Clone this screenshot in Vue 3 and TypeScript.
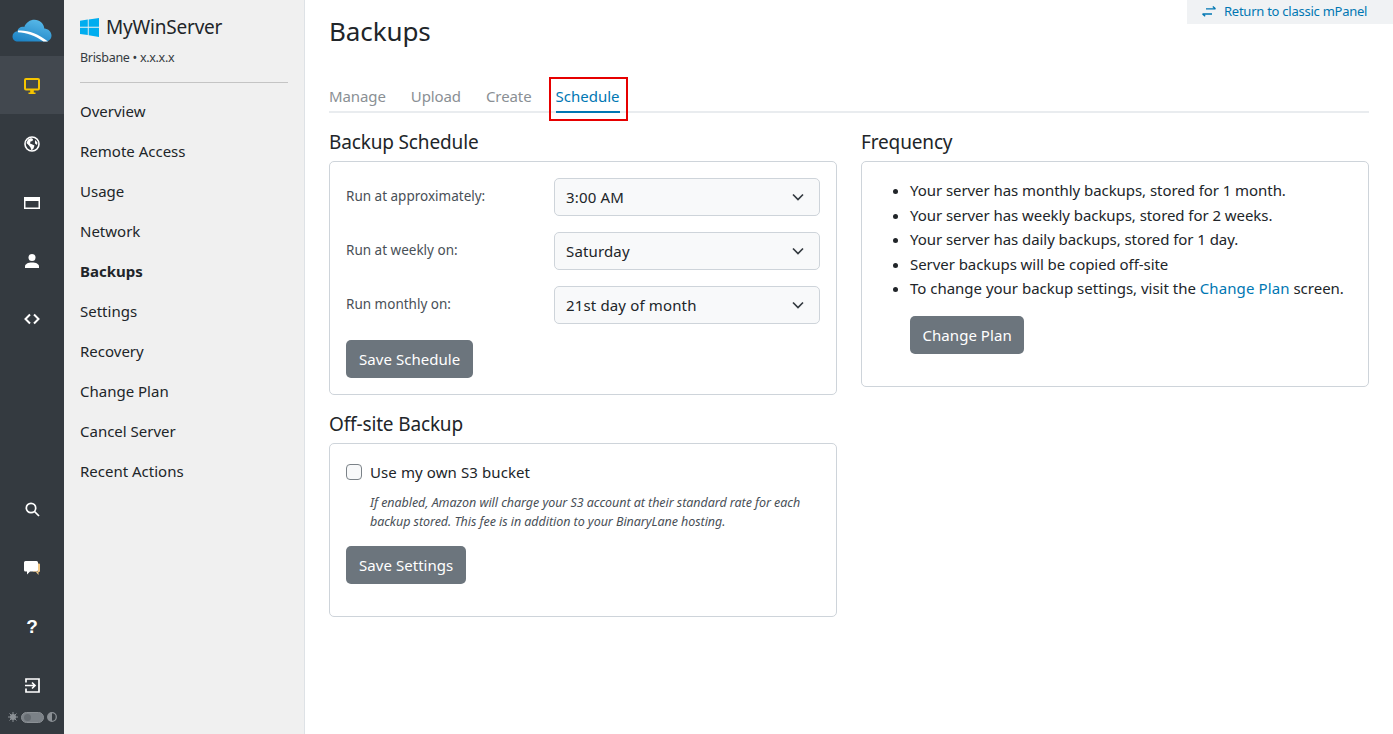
<script setup lang="ts">
const navItems: string[] = ['Overview', 'Remote Access', 'Usage', 'Network', 'Backups', 'Settings', 'Recovery', 'Change Plan', 'Cancel Server', 'Recent Actions']
const tabs: string[] = ['Manage', 'Upload', 'Create', 'Schedule']
const scheduleRows = [
  { label: 'Run at approximately:', value: '3:00 AM' },
  { label: 'Run at weekly on:', value: 'Saturday' },
  { label: 'Run monthly on:', value: '21st day of month' },
]
const plainFacts: string[] = [
  'Your server has monthly backups, stored for 1 month.',
  'Your server has weekly backups, stored for 2 weeks.',
  'Your server has daily backups, stored for 1 day.',
  'Server backups will be copied off-site',
]
</script>

<template>
  <div class="app">
    <aside class="rail">
      <div class="rail-logo">
        <svg width="40" height="23" viewBox="0 0 40 23">
          <defs>
            <linearGradient id="cloudFill" x1="0.65" y1="0" x2="0.2" y2="1">
              <stop offset="0" stop-color="#57b8e8"/>
              <stop offset="1" stop-color="#1c82c4"/>
            </linearGradient>
          </defs>
          <path d="M6 22.500C2.800 22.500 .5 20.300 .5 17.400c0-2.700 2-4.800 4.800-5.100C6 9 9 7.300 12.300 8 14 3.500 18 .8 22.500.8c5.300 0 9.300 3.600 9.800 8.600 4 .3 7.200 3.300 7.200 7 0 3.500-2.700 6.100-6.200 6.100z" fill="url(#cloudFill)"/>
          <path d="M6 11.600C15 10.800 26 14.500 36 22.500h-4.500C23 16.500 14 13.500 6 13.200z" fill="#fff"/>
        </svg>
      </div>
      <a class="rail-item active">
        <svg width="16" height="16" viewBox="0 0 16 16" fill="none"><rect x="1" y="1" width="14" height="10.500" rx="1" stroke="#f5c400" stroke-width="2"/><path d="M4.500 16h7v-1.500H9.800V12H6.200v2.500H4.500z" fill="#f5c400"/></svg>
      </a>
      <a class="rail-item">
        <svg width="16" height="16" viewBox="0 0 16 16"><circle cx="8" cy="8" r="7" fill="none" stroke="#fff" stroke-width="1.600"/><path d="M4 3.500l3-1.500 2 1-.500 2-2 .5-.5 2 2.500 1 2 1-1 3-2 2-1-3-1.500-2L2.500 7z M11 4l2.500 2.500L13 9l-2-1.500z" fill="#fff"/></svg>
      </a>
      <a class="rail-item">
        <svg width="16" height="12" viewBox="0 0 16 12"><path fill-rule="evenodd" d="M0 0h16v12H0zM1.500 4v6.500h13V4z" fill="#fff"/></svg>
      </a>
      <a class="rail-item">
        <svg width="14" height="14" viewBox="0 0 14 14"><circle cx="7" cy="3.500" r="3.500" fill="#fff"/><path d="M0 14v-1.500C0 10 3 8.500 7 8.500s7 1.500 7 4V14z" fill="#fff"/></svg>
      </a>
      <a class="rail-item">
        <svg width="16" height="12" viewBox="0 0 16 12" fill="none" stroke="#fff" stroke-width="2"><path d="M6 1.500L1.500 6 6 10.500M10 1.500L14.500 6 10 10.500"/></svg>
      </a>
      <div class="rail-spacer"></div>
      <a class="rail-item low">
        <svg width="15" height="15" viewBox="0 0 15 15" fill="none" stroke="#fff" stroke-width="1.700"><circle cx="6" cy="6" r="4.700"/><path d="M9.500 9.500L14 14"/></svg>
      </a>
      <a class="rail-item low">
        <svg width="16" height="15" viewBox="0 0 16 15"><path d="M0 1.500A1.500 1.500 0 0 1 1.500 0h11A1.500 1.500 0 0 1 14 1.500V9a1.500 1.500 0 0 1-1.500 1.500H6l-3 3v-3H1.500A1.500 1.500 0 0 1 0 9z" fill="#fff"/><path d="M14 2.500h1a1 1 0 0 1 1 1V10a1 1 0 0 1-1 1h-.500v3l-2.500-3H9v-.500h4.500a.5.5 0 0 0 .500-.500z" fill="#f3c987"/></svg>
      </a>
      <a class="rail-item low">
        <span class="help">?</span>
      </a>
      <a class="rail-item low">
        <svg width="15" height="15" viewBox="0 0 15 15" fill="none" stroke="#fff" stroke-width="1.700"><path d="M1 4.500V1h13v13H1v-3.500"/><path d="M0 7.500h9.500M7 4.500l3 3-3 3"/></svg>
      </a>
      <div class="theme">
        <svg width="10" height="10" viewBox="0 0 10 10"><circle cx="5" cy="5" r="3" fill="#8b9095"/><path d="M5 0v10M0 5h10M1.500 1.500l7 7M8.500 1.500l-7 7" stroke="#8b9095" stroke-width="1"/></svg>
        <span class="toggle"><span class="knob"></span></span>
        <svg width="10" height="10" viewBox="0 0 10 10"><circle cx="5" cy="5" r="4.300" fill="none" stroke="#8b9095" stroke-width="1.300"/><path d="M5 .7a4.300 4.300 0 0 0 0 8.600z" fill="#8b9095"/></svg>
      </div>
    </aside>

    <nav class="side">
      <div class="server">
        <svg width="19" height="19" viewBox="0 0 19 19"><path d="M0 2.700L7.800 1.500v7.300H0zM8.700 1.400L19 0v8.800H8.700zM0 9.700h7.800v7.400L0 16zM8.700 9.700H19V19L8.700 17.300z" fill="#00adef"/></svg>
        <span>MyWinServer</span>
      </div>
      <div class="location">Brisbane • x.x.x.x</div>
      <hr class="side-rule" />
      <a v-for="item in navItems" :key="item" class="side-link" :class="{ current: item === 'Backups' }">{{ item }}</a>
    </nav>

    <main class="main">
      <a class="classic">
        <svg width="14" height="11" viewBox="0 0 14 11" fill="none" stroke="#0077b3" stroke-width="1.300"><path d="M4 2.800h9.500M10.800.5l2.700 2.300M0.500 8h9.500M3.200 10.300L.5 8"/></svg>
        <span>Return to classic mPanel</span>
      </a>
      <h1>Backups</h1>
      <div class="tabs">
        <a v-for="tab in tabs" :key="tab" class="tab" :class="{ on: tab === 'Schedule' }">{{ tab }}</a>
        <span class="highlight"></span>
      </div>
      <div class="cols">
        <div class="col">
          <h2>Backup Schedule</h2>
          <section class="card schedule">
            <div v-for="row in scheduleRows" :key="row.label" class="row">
              <label>{{ row.label }}</label>
              <div class="select">
                <span>{{ row.value }}</span>
                <svg width="12" height="8" viewBox="0 0 12 8" fill="none" stroke="#343a40" stroke-width="1.700"><path d="M1 1.500l5 5 5-5"/></svg>
              </div>
            </div>
            <button class="btn" type="button">Save Schedule</button>
          </section>
          <h2 class="offsite">Off-site Backup</h2>
          <section class="card bucket">
            <label class="check"><input type="checkbox" /><span>Use my own S3 bucket</span></label>
            <p class="note">If enabled, Amazon will charge your S3 account at their standard rate for each backup stored. This fee is in addition to your BinaryLane hosting.</p>
            <button class="btn" type="button">Save Settings</button>
          </section>
        </div>
        <div class="col">
          <h2>Frequency</h2>
          <section class="card freq">
            <ul>
              <li v-for="fact in plainFacts" :key="fact">{{ fact }}</li>
              <li class="last">To change your backup settings, visit the <a class="link">Change Plan</a> screen.</li>
            </ul>
            <button class="btn plan" type="button">Change Plan</button>
          </section>
        </div>
      </div>
    </main>
  </div>
</template>

<style>
html, body { margin: 0; background: #fff; }
</style>

<style scoped>
.app { display: flex; height: 734px; overflow: hidden; font-family: "Noto Sans", "Open Sans", sans-serif; font-size: 15px; color: #212529; }
.rail { width: 64px; flex: none; background: #343a40; display: flex; flex-direction: column; }
.rail-logo { height: 56px; display: flex; align-items: center; justify-content: center; padding-top: 4px; padding-left: 0; box-sizing: border-box; flex: none; }
.rail-item { height: 58.330px; box-sizing: border-box; padding-top: 2px; display: flex; align-items: center; justify-content: center; flex: none; }
.rail-item.low { height: 58.670px; }
.rail-item.active { background: #42484f; }
.rail-spacer { flex: 1; }
.help { color: #fff; font-weight: 700; font-size: 19px; font-family: "Liberation Sans", sans-serif; }
.theme { height: 20px; display: flex; align-items: center; justify-content: center; gap: 3px; padding-bottom: 14px; box-sizing: border-box; flex: none; }
.toggle { width: 23px; height: 11px; box-sizing: border-box; border: 1px solid #8b9095; border-radius: 6px; background: #7b8187; position: relative; display: block; }
.knob { position: absolute; left: 2px; top: 1px; width: 7px; height: 7px; border-radius: 50%; background: #666c72; }
.side { width: 241px; flex: none; box-sizing: border-box; background: #f0f0f0; border-right: 1px solid #dee2e6; padding: 15px 16px 0; display: flex; flex-direction: column; }
.server { display: flex; align-items: center; gap: 7px; font-size: 19px; line-height: 24px; letter-spacing: -.2px; }
.location { margin-top: 9px; font-size: 12.500px; line-height: 20px; color: #343a40; letter-spacing: -.3px; }
.side-rule { width: 208px; margin: 14px 0 8px; border: 0; border-top: 1px solid #c4c4c4; }
.side-link { height: 40px; line-height: 40px; font-size: 15px; color: #212529; display: block; }
.side-link.current { font-weight: 700; }
.main { flex: 1; min-width: 0; padding: 0 24px; position: relative; }
.classic { position: absolute; right: 0; top: 0; width: 206px; height: 24px; padding-bottom: 2px; background: #f0f2f4; color: #0077b3; font-size: 13px; letter-spacing: -.25px; display: flex; align-items: center; gap: 8px; padding-left: 15px; box-sizing: border-box; }
h1 { margin: 0; padding-top: 12px; height: 56px; box-sizing: border-box; font-size: 26px; line-height: 38px; font-weight: 400; letter-spacing: -.1px; }
.tabs { margin-top: 24px; height: 33px; box-sizing: border-box; border-bottom: 2px solid #e9ecef; display: flex; gap: 25px; position: relative; }
.tab { height: 33px; box-sizing: border-box; line-height: 33px; font-size: 15px; color: #8a8f94; letter-spacing: -.1px; }
.tab.on { color: #0077b3; border-bottom: 2px solid #0077b3; margin-left: -1px; letter-spacing: 0; }
.highlight { position: absolute; left: 220px; top: -3px; width: 79px; height: 44px; box-sizing: border-box; border: 2px solid #e60000; pointer-events: none; }
.cols { display: grid; grid-template-columns: 1fr 1fr; gap: 24px; margin-top: 15px; }
h2 { margin: 0 0 5px; font-size: 19px; line-height: 28px; font-weight: 400; letter-spacing: -.15px; }
.card { border: 1px solid #ced4da; border-radius: 5px; padding: 16px; box-sizing: border-box; }
.schedule { height: 234px; }
.row { display: flex; align-items: center; height: 38px; margin-bottom: 16px; }
.row label { width: 208px; flex: none; font-size: 13.500px; color: #495057; padding-bottom: 2px; }
.select { flex: 1; height: 38px; box-sizing: border-box; border: 1px solid #ced4da; border-radius: 5px; background: #f8f9fa; display: flex; align-items: center; justify-content: space-between; padding: 0 15px 0 11px; font-size: 15px; letter-spacing: .15px; }
.btn { display: block; height: 38px; padding: 0 13px; border: 0; border-radius: 5px; background: #6c757d; color: #fff; font: inherit; font-size: 15px; letter-spacing: .05px; }
.offsite { margin-top: 15px; }
.bucket { height: 174px; padding-top: 17px; }
.check { display: flex; align-items: center; gap: 8px; height: 21px; font-size: 15px; letter-spacing: .1px; }
.check input { appearance: none; width: 16px; height: 16px; margin: 0; border: 1px solid #7b8288; border-radius: 4px; background: #f8f9fa; }
.note { margin: 11px 0 15px 24px; width: 445px; font-size: 12.500px; line-height: 19px; font-style: italic; color: #495057; letter-spacing: -.05px; }
.freq { height: 226px; padding: 16px; }
ul { margin: 0; padding: 0 0 0 32px; }
li { line-height: 24.500px; font-size: 15px; letter-spacing: -.06px; white-space: nowrap; }
li.last { letter-spacing: -.01px; }
.link { color: #0077b3; letter-spacing: .1px; }
.plan { margin: 15px 0 0 32px; padding: 0 12.500px; }
</style>
